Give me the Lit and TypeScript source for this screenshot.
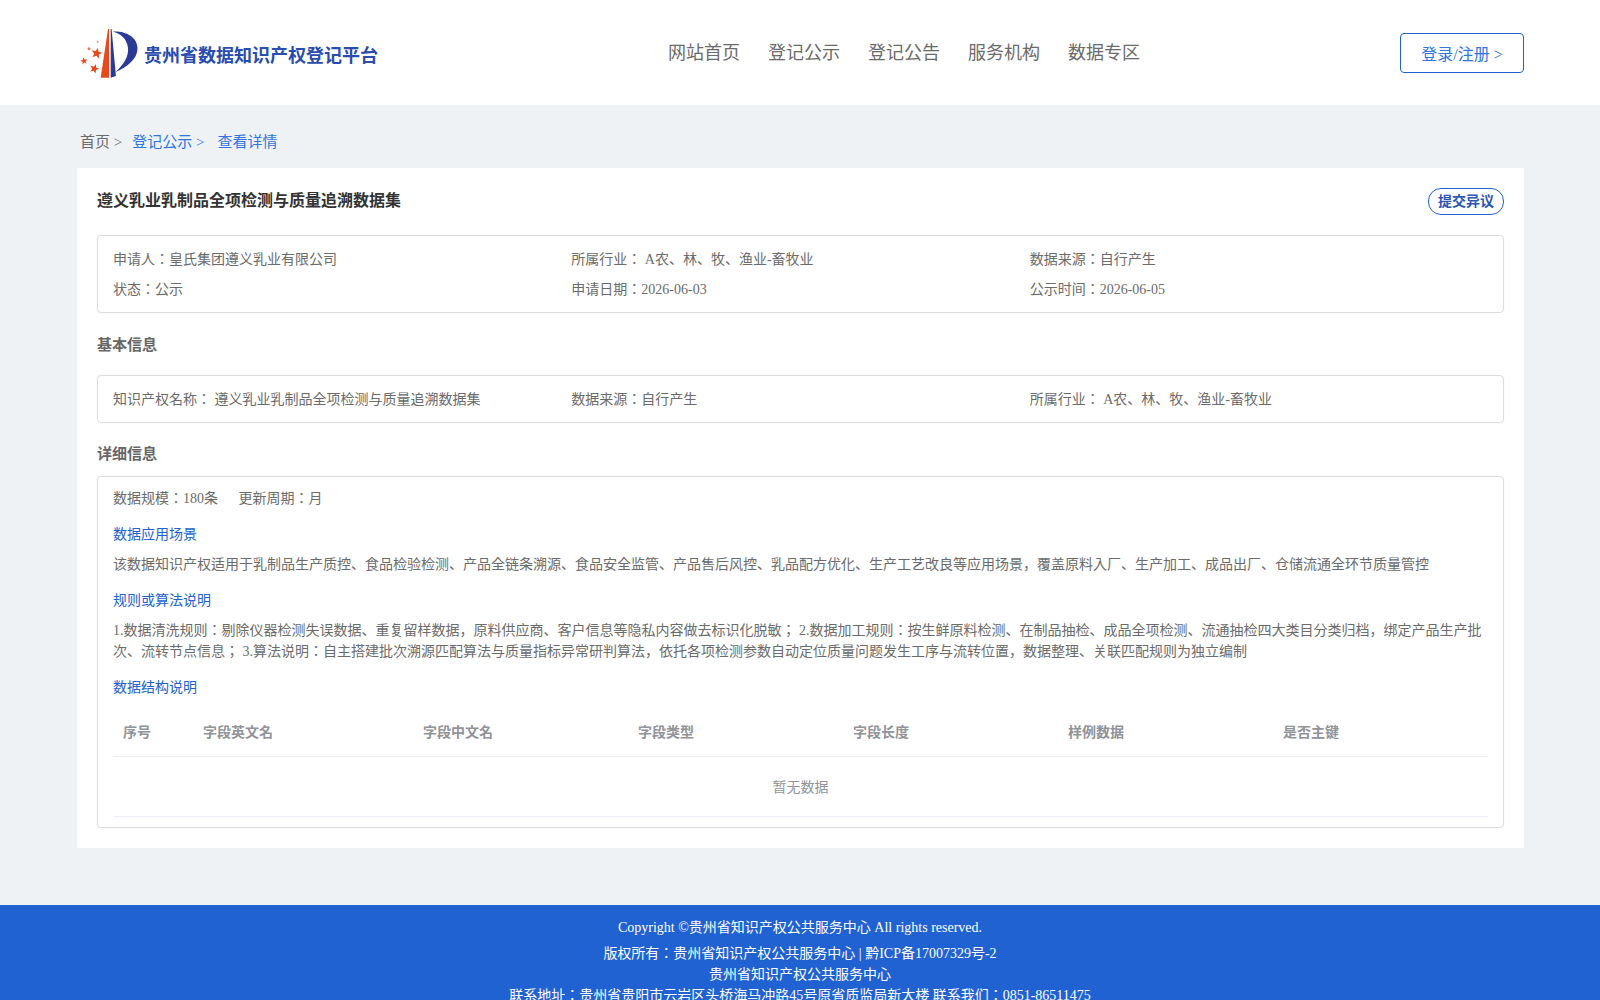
import { LitElement, html, css } from "lit";
import { customElement } from "lit/decorators.js";

const NAV = ["网站首页", "登记公示", "登记公告", "服务机构", "数据专区"];
const COLUMNS = ["序号", "字段英文名", "字段中文名", "字段类型", "字段长度", "样例数据", "是否主键"];

const star = (cx: number, cy: number, r: number, rot = 0) => {
  const pts: string[] = [];
  for (let i = 0; i < 10; i++) {
    const rad = i % 2 ? r * 0.42 : r;
    const a = ((i * 36 + rot - 90) * Math.PI) / 180;
    pts.push(`${(cx + rad * Math.cos(a)).toFixed(2)},${(cy + rad * Math.sin(a)).toFixed(2)}`);
  }
  return pts.join(" ");
};

@customElement("app-root")
export class AppRoot extends LitElement {
  static override styles = css`
    :host {
      display: block;
      background: #eff2f5;
      font-family: "Liberation Serif", "Noto Sans CJK JP", serif;
      font-size: 14px;
      color: #6b6b6b;
    }

    .header {
      height: 105px;
      background: #fff;
      padding: 0 76px 0 77px;
      display: flex;
      align-items: center;
    }
    .brand {
      display: flex;
      align-items: center;
      gap: 7px;
      width: 301px;
      color: #2a4bb0;
      font-size: 18px;
      font-weight: 700;
    }
    .brand span {
      margin-top: 2px;
      white-space: nowrap;
    }
    .brand svg {
      display: block;
      width: 60px;
      height: 52px;
      overflow: visible;
    }
    .nav {
      display: flex;
      gap: 28px;
      margin-left: 290px;
      margin-bottom: 4px;
      font-size: 18px;
      color: #6b6b6b;
    }
    .login {
      margin-left: auto;
      width: 124px;
      height: 40px;
      box-sizing: border-box;
      border: 1px solid #2062d2;
      border-radius: 4px;
      color: #2f74e0;
      font-size: 16px;
      display: flex;
      align-items: center;
      justify-content: center;
    }

    .crumbs {
      box-sizing: border-box;
      padding: 8px 80px 0;
      height: 63px;
      display: flex;
      align-items: center;
      font-size: 15px;
    }
    .crumbs .link {
      color: #2f74e0;
      margin-left: 10px;
    }
    .crumbs .link + .link {
      margin-left: 13px;
    }

    .card {
      margin: 0 76px 0 77px;
      background: #fff;
      padding: 20px;
    }
    .title-row {
      display: flex;
      justify-content: space-between;
      align-items: flex-start;
      height: 27px;
      margin-bottom: 20px;
    }
    .title {
      font-size: 16px;
      font-weight: 700;
      color: #333;
      line-height: 26px;
    }
    .dispute {
      box-sizing: border-box;
      height: 27px;
      padding: 0 9px;
      border: 1px solid #2062d2;
      border-radius: 13px;
      color: #2a55b5;
      font-weight: 700;
      line-height: 26px;
    }

    .box {
      border: 1px solid #ddd;
      border-radius: 4px;
      box-shadow: 0 0 2px rgba(0, 0, 0, 0.06);
      padding: 0 15px;
    }
    .grid {
      display: grid;
      grid-template-columns: repeat(3, 1fr);
      line-height: 21px;
      row-gap: 9px;
    }
    .summary {
      padding: 13px 0 12px;
    }
    .basic {
      padding: 13px 0 12px;
    }
    .section {
      font-size: 15px;
      font-weight: 700;
      color: #666;
      line-height: 22px;
    }
    .section.first {
      margin: 21px 0 19px;
    }
    .section.second {
      margin: 20px 0 11px;
    }

    .details {
      line-height: 21px;
      padding-top: 11px;
    }
    .scale span + span {
      margin-left: 17px;
    }
    .sub {
      color: #2062d2;
      margin-top: 15px;
    }
    .text {
      margin-top: 9px;
    }

    .fields {
      margin-top: 11px;
      margin-bottom: 10px;
    }
    .row {
      display: grid;
      grid-template-columns: 80px 220px repeat(5, 1fr);
      height: 47px;
      align-items: center;
      border-bottom: 1px solid #ebeef5;
      color: #909399;
      font-weight: 700;
    }
    .row span {
      padding-left: 10px;
    }
    .empty {
      box-sizing: border-box;
      height: 60px;
      padding-top: 1px;
      display: flex;
      align-items: center;
      justify-content: center;
      border-bottom: 1px solid #ebeef5;
      color: #909399;
    }

    .footer {
      margin-top: 57px;
      background: #2062d2;
      color: #fff;
      text-align: center;
      line-height: 21px;
      padding: 12px 0;
    }
    .footer .copy {
      margin-bottom: 5px;
    }
  `;

  override render() {
    return html`
      <header class="header">
        <div class="brand">
          <svg viewBox="0 0 60 52" aria-hidden="true">
            <path d="M31 2 L32 2 L32 50.7 L23.7 50.7 Z" fill="#e8491c"></path>
            <path d="M33.7 2 L34.6 2 L38.9 49 L33.7 50.7 Z" fill="#2a3a96"></path>
            <path
              d="M35.5 4.5 C47 3.5 60.5 9 60.5 21.5 C60.5 32 50 40 38.7 45 C46 38 52 30 51 21 C50 12 44 6.5 35.5 4.5 Z"
              fill="#2a3a96"
            ></path>
            <polygon points=${star(19.7, 26.3, 5.8, 12)} fill="#e8491c"></polygon>
            <polygon points=${star(7, 34, 3.8, -10)} fill="#e8491c"></polygon>
            <polygon points=${star(17.3, 41.7, 5, 20)} fill="#e8491c"></polygon>
            <circle cx="12" cy="21.7" r="1.5" fill="#ef7a50"></circle>
            <circle cx="20.7" cy="14.7" r="1" fill="#ef8c66"></circle>
          </svg>
          <span>贵州省数据知识产权登记平台</span>
        </div>
        <nav class="nav">${NAV.map((item) => html`<span>${item}</span>`)}</nav>
        <div class="login">登录/注册 &gt;</div>
      </header>

      <div class="crumbs">
        <span>首页 &gt;</span>
        <span class="link">登记公示 &gt;</span>
        <span class="link">查看详情</span>
      </div>

      <main class="card">
        <div class="title-row">
          <div class="title">遵义乳业乳制品全项检测与质量追溯数据集</div>
          <div class="dispute">提交异议</div>
        </div>

        <div class="box">
          <div class="grid summary">
            <span>申请人：皇氏集团遵义乳业有限公司</span>
            <span>所属行业： A农、林、牧、渔业-畜牧业</span>
            <span>数据来源：自行产生</span>
            <span>状态：公示</span>
            <span>申请日期：2026-06-03</span>
            <span>公示时间：2026-06-05</span>
          </div>
        </div>

        <div class="section first">基本信息</div>
        <div class="box">
          <div class="grid basic">
            <span>知识产权名称： 遵义乳业乳制品全项检测与质量追溯数据集</span>
            <span>数据来源：自行产生</span>
            <span>所属行业： A农、林、牧、渔业-畜牧业</span>
          </div>
        </div>

        <div class="section second">详细信息</div>
        <div class="box details">
          <div class="scale"><span>数据规模：180条</span> <span>更新周期：月</span></div>
          <div class="sub">数据应用场景</div>
          <div class="text">
            该数据知识产权适用于乳制品生产质控、食品检验检测、产品全链条溯源、食品安全监管、产品售后风控、乳品配方优化、生产工艺改良等应用场景，覆盖原料入厂、生产加工、成品出厂、仓储流通全环节质量管控
          </div>
          <div class="sub">规则或算法说明</div>
          <div class="text">
            1.数据清洗规则：剔除仪器检测失误数据、重复留样数据，原料供应商、客户信息等隐私内容做去标识化脱敏； 2.数据加工规则：按生鲜原料检测、在制品抽检、成品全项检测、流通抽检四大类目分类归档，绑定产品生产批次、流转节点信息； 3.算法说明：自主搭建批次溯源匹配算法与质量指标异常研判算法，依托各项检测参数自动定位质量问题发生工序与流转位置，数据整理、关联匹配规则为独立编制
          </div>
          <div class="sub">数据结构说明</div>
          <div class="fields">
            <div class="row">${COLUMNS.map((c) => html`<span>${c}</span>`)}</div>
            <div class="empty">暂无数据</div>
          </div>
        </div>
      </main>

      <footer class="footer">
        <div class="copy">Copyright ©贵州省知识产权公共服务中心 All rights reserved.</div>
        <div>版权所有：贵州省知识产权公共服务中心 | 黔ICP备17007329号-2</div>
        <div>贵州省知识产权公共服务中心</div>
        <div>联系地址：贵州省贵阳市云岩区头桥海马冲路45号原省质监局新大楼 联系我们：0851-86511475</div>
      </footer>
    `;
  }
}

declare global {
  interface HTMLElementTagNameMap {
    "app-root": AppRoot;
  }
}
